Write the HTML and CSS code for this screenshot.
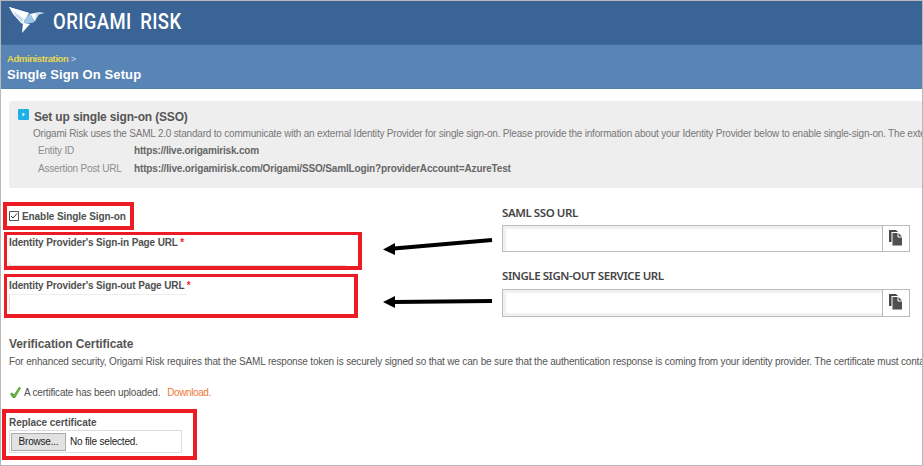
FILE: index.html
```html
<!DOCTYPE html>
<html lang="en">
<head>
<meta charset="utf-8">
<title>Single Sign On Setup</title>
<link rel="stylesheet" href="styles.css">
</head>
<body>
<div class="frame">
  <header class="brand">
    <svg class="bird" width="37" height="27" viewBox="0 0 37 27">
      <path fill="#fff" d="M0 0 20 6 14 17 12 16 4 7Z"/>
      <path fill="#c5dbee" d="M4 4 15 11 13 16 7 9Z"/>
      <path fill="#fff" d="M0 0 20 6 14.500 12Z"/>
      <path fill="#9fc5e8" d="M21 6.500 24 8 25 15.500 15 17 15 13Z"/>
      <path fill="#fff" d="M21 7 28 5.500 26 15 23 9Z"/>
      <path fill="#c5dbee" d="M27 6 30 5 36 6 30 7.500 26 14Z"/>
      <path fill="#fff" d="M14 16 21 17 13 26Z"/>
    </svg>
    <span class="brand-name">ORIGAMI RISK</span>
  </header>
  <div class="titlebar">
    <div class="crumb"><b>Administration</b> &gt;</div>
    <h1>Single Sign On Setup</h1>
  </div>
  <main>
    <section class="setup">
      <svg class="bullet" width="11" height="11" viewBox="0 0 11 11"><rect width="11" height="11" rx="1" fill="#1eb0e8"/><path d="M4.500 3.500 7 5.500 4.500 7.500Z" fill="#fff"/></svg>
      <div class="setup-body">
        <h2>Set up single sign-on (SSO)</h2>
        <p class="intro">Origami Risk uses the SAML 2.0 standard to communicate with an external Identity Provider for single sign-on. Please provide the information about your Identity Provider below to enable single-sign-on. The exte</p>
        <div class="pair"><span class="key entity">Entity ID</span><b class="host">https://live.origamirisk.com</b></div>
        <div class="pair"><span class="key">Assertion Post URL</span><b>https://live.origamirisk.com/Origami/SSO/SamlLogin?providerAccount=AzureTest</b></div>
      </div>
    </section>
    <div class="columns">
      <div class="left">
        <label class="mark enable"><svg width="10" height="10" viewBox="0 0 10 10"><path d="M.5.5h9v9h-9z" fill="#fff" stroke="#555"/><path d="M2 5 4 7 8 2.500" fill="none" stroke="#333"/></svg><span>Enable Single Sign-on</span></label>
        <div class="mark signin"><div class="label"><span>Identity Provider's Sign-in Page URL</span> <i>*</i></div><div class="line"></div></div>
        <div class="mark signout"><div class="label"><span>Identity Provider's Sign-out Page URL</span> <i>*</i></div><div class="line"></div></div>
      </div>
      <svg class="arrows" width="110" height="80" viewBox="383 230 110 80"><path d="M492 240 394 248.500M492 301 394 302" stroke="#000" stroke-width="4"/><path d="M383 249.500 395 243V255ZM383 302 395 296V308Z"/></svg>
      <div class="right">
        <div class="caption saml">SAML SSO URL</div>
        <div class="field"><div class="input"></div><div class="copy"><svg width="14" height="16" viewBox="0 0 14 16"><path d="M0 0H7L9 2H2.500V12H0Z" fill="#484848"/><path d="M3.500 3h6l3.500 3.500V15.500H3.500Z" fill="#505050"/><path d="M9 3v4h4" fill="none" stroke="#fff"/></svg></div></div>
        <div class="caption second">SINGLE SIGN-OUT SERVICE URL</div>
        <div class="field last"><div class="input"></div><div class="copy"><svg width="14" height="16" viewBox="0 0 14 16"><path d="M0 0H7L9 2H2.500V12H0Z" fill="#484848"/><path d="M3.500 3h6l3.500 3.500V15.500H3.500Z" fill="#505050"/><path d="M9 3v4h4" fill="none" stroke="#fff"/></svg></div></div>
      </div>
    </div>
    <h3>Verification Certificate</h3>
    <p class="security">For enhanced security, Origami Risk requires that the SAML response token is securely signed so that we can be sure that the authentication response is coming from your identity provider. The certificate must conta</p>
    <div class="uploaded"><svg width="11" height="12" viewBox="0 0 11 12"><path d="M0 7 2 5.500 4 7.500 9 0 11 1 5 11H3Z" fill="#4f9e2e"/><path d="M1.500 7 4 9.500 9.500 1.500" fill="none" stroke="#86c95c" stroke-width=".8"/></svg><span class="msg">A certificate has been uploaded.</span><a>Download.</a></div>
    <div class="mark replace"><div class="label"><span>Replace certificate</span></div><div class="file"><span class="browse"><span>Browse...</span></span><span class="none">No file selected.</span></div></div>
  </main>
</div>
</body>
</html>
```
FILE: styles.css
```css
* { box-sizing: border-box; }
body { margin: 0; font: 10px/12px "Liberation Sans", Arial, sans-serif; color: #505050; background: #fff; }
h1, h2, h3, p { margin: 0; white-space: nowrap; }
svg { display: block; flex: none; }
.frame { width: 923px; height: 466px; border: 1px solid #b8b8b8; overflow: hidden; }
.brand { height: 44px; background: #396495; display: flex; padding: 6px 0 0 8px; border-bottom: 1px solid #426d9f; }
.brand-name { font: 500 22px/27px Roboto, sans-serif; color: #fff; margin: 1px 0 0 7px; transform: scaleX(.84); transform-origin: left; white-space: nowrap; letter-spacing: .5px; word-spacing: 4px; }
.titlebar { height: 44px; background: #5984b6; padding: 8px 0 0 6px; border-bottom: 1px solid #5680b2; }
.crumb { font-size: 9.500px; letter-spacing: -.4px; height: 12px; color: #d0dced; }
.crumb b { color: #e8d84e; }
h1 { font-size: 13px; line-height: 17px; letter-spacing: .1px; margin-top: 1px; color: #fff; }
main { padding: 12px 0 0 1px; }
.setup { margin: 0 0 0 7px; height: 87px; background: #eee; border-radius: 3px 0 0 3px; display: flex; padding: 8px 0 0 9px; }
.setup-body { margin-left: 4px; }
h2 { font-size: 12px; line-height: 16px; letter-spacing: -.16px; color: #555; margin-left: 1px; }
.intro { color: #777; margin-top: 3px; letter-spacing: -.197px; }
.pair { display: flex; height: 17.500px; margin: 0 0 0 5px; padding-top: 5px; color: #666; letter-spacing: -.147px; }
.key { width: 96px; color: #8d8d8d; white-space: nowrap; letter-spacing: -.2px; }
.host { letter-spacing: -.18px; }
.columns { display: flex; height: 133px; }
.left { width: 381px; flex: none; padding-top: 14px; }
.mark { border: 4px solid #ed1c24; }
.enable { display: flex; width: 131px; height: 28px; margin-left: 1px; padding: 5px 0 0 2px; font-weight: bold; letter-spacing: -.08px; }
.enable svg { margin-right: 3px; }
.label { font-weight: bold; white-space: nowrap; height: 12px; letter-spacing: -.13px; }
.label i { color: #f22; font-style: normal; }
.signin { border-width: 3px 4px 4px 3px; width: 358px; height: 38px; margin: 2px 0 0 2px; padding: 2px 0 0 2px; }
.signin .line { width: 337px; height: 4px; margin-top: 13px; border-left: 1px solid #ddd; border-bottom: 1px solid #ddd; }
.signout { border-width: 3px 4px 4px 3px; width: 354px; height: 44px; margin: 4px 0 0 2px; padding: 3px 0 0 2px; }
.signout .line { width: 178px; height: 17px; margin-top: 2px; border-left: 1px solid #ddd; border-top: 1px solid #eee; }
.arrows { margin-top: 42px; }
.right { margin-left: 9px; width: 408px; padding-top: 17px; }
.caption { font: 600 11.500px/16px "Noto Sans", sans-serif; letter-spacing: -.43px; color: #454545; white-space: nowrap; height: 20px; }
.second { margin-top: 16px; height: 21px; }
.field { height: 27px; border: 1px solid #bbb; display: flex; }
.input { flex: 1; border: 3px solid #f1f1f1; border-bottom-width: 0; border-right: 0; }
.field.last { height: 28px; }
.last .input { border-bottom-width: 3px; }
.copy { width: 27px; border-left: 1px solid #bbb; padding: 4px 0 0 6px; }
h3 { font-size: 12px; line-height: 16px; letter-spacing: -.1px; margin: 15px 0 0 7px; color: #555; }
.security { margin: 4px 0 0 7px; color: #555; letter-spacing: -.162px; }
.uploaded { display: flex; margin: 19px 0 0 8px; height: 12px; }
.msg { margin-left: 3px; letter-spacing: -.19px; }
.uploaded a { margin-left: 7px; color: #f07840; letter-spacing: -.4px; }
.replace { width: 195px; height: 51px; margin-top: 10px; padding: 4px 0 0 3px; }
.replace .label { letter-spacing: -.05px; }
.file { width: 173px; height: 23px; border: 1px solid #ddd; margin-top: 1px; padding: 2px 0 0 1px; display: flex; line-height: 17px; color: #222; letter-spacing: -.2px; }
.browse { width: 55px; height: 18px; border: 1px solid #aaa; background: #e2e2e2; text-align: center; line-height: 16px; }
.none { margin-left: 4px; }
```
